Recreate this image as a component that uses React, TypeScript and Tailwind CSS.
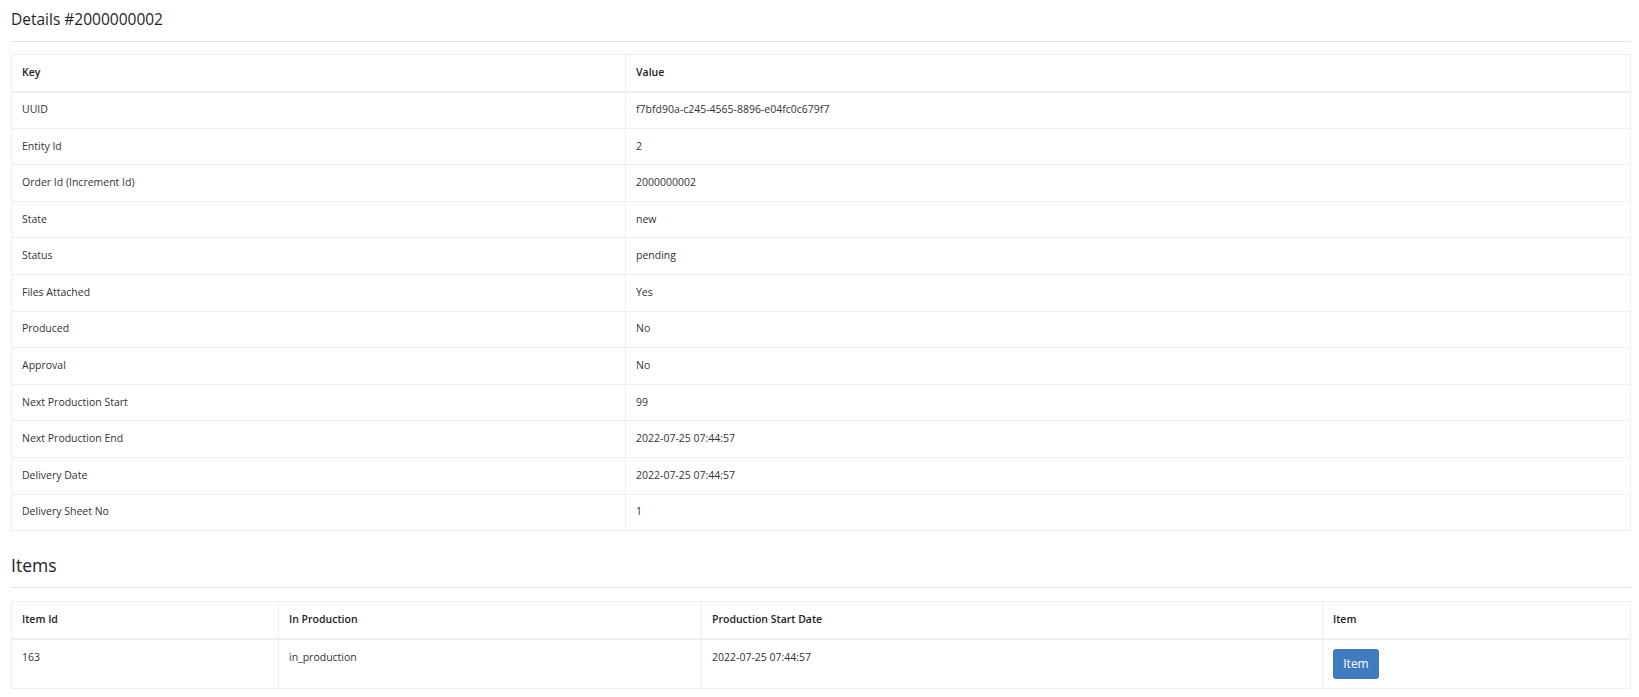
const DETAILS: [string, string][] = [
  ["UUID", "f7bfd90a-c245-4565-8896-e04fc0c679f7"],
  ["Entity Id", "2"],
  ["Order Id (Increment Id)", "2000000002"],
  ["State", "new"],
  ["Status", "pending"],
  ["Files Attached", "Yes"],
  ["Produced", "No"],
  ["Approval", "No"],
  ["Next Production Start", "99"],
  ["Next Production End", "2022-07-25 07:44:57"],
  ["Delivery Date", "2022-07-25 07:44:57"],
  ["Delivery Sheet No", "1"],
];

const ITEMS = [{ id: "163", inProduction: "in_production", start: "2022-07-25 07:44:57" }];

const font = { fontFamily: '"Segoe UI", "Open Sans", "Noto Sans", sans-serif' };

export default function App() {
  return (
    <div className="min-h-screen bg-white pl-[11px] pr-[8px] text-[#333]" style={font}>
      <h4 className="pt-[8px] text-[15.5px] font-medium leading-[22px] text-[#1f1f1f]">Details #2000000002</h4>
      <hr className="mt-[11px] border-t border-[#e2e2e2]" />

      <table className="mt-[12px] w-full border-collapse border border-[#eee] text-[10.5px]">
        <thead>
          <tr className="h-[37px] border-b-2 border-[#eee]">
            <th className="w-[614px] border-r border-[#eee] px-[10px] text-left font-semibold text-[#222]">Key</th>
            <th className="px-[10px] text-left font-semibold text-[#222]">Value</th>
          </tr>
        </thead>
        <tbody>
          {DETAILS.map(([k, v]) => (
            <tr key={k} className="h-[36.6px] border-b border-[#eee]">
              <td className="border-r border-[#eee] px-[10px]">{k}</td>
              <td className="px-[10px]">{v}</td>
            </tr>
          ))}
        </tbody>
      </table>

      <h4 className="mt-[22px] text-[17.5px] leading-[24px] text-[#222]">Items</h4>
      <hr className="mt-[10px] border-t border-[#e2e2e2]" />

      <table className="mt-[13px] w-full border-collapse border border-[#eee] text-[10.5px]">
        <thead>
          <tr className="h-[37px] border-b-2 border-[#eee]">
            <th className="w-[267px] border-r border-[#eee] px-[10px] text-left font-semibold text-[#222]">Item Id</th>
            <th className="w-[423px] border-r border-[#eee] px-[10px] text-left font-semibold text-[#222]">In Production</th>
            <th className="w-[621px] border-r border-[#eee] px-[10px] text-left font-semibold text-[#222]">Production Start Date</th>
            <th className="px-[10px] text-left font-semibold text-[#222]">Item</th>
          </tr>
        </thead>
        <tbody>
          {ITEMS.map((it) => (
            <tr key={it.id} className="h-[50px] border-b border-[#eee] align-top">
              <td className="border-r border-[#eee] px-[10px] pt-[10px]">{it.id}</td>
              <td className="border-r border-[#eee] px-[10px] pt-[10px]">{it.inProduction}</td>
              <td className="border-r border-[#eee] px-[10px] pt-[10px]">{it.start}</td>
              <td className="px-[10px] pt-[9px]">
                <button className="h-[30px] w-[46px] rounded-[3px] bg-[#417bbf] text-[12px] text-white">Item</button>
              </td>
            </tr>
          ))}
        </tbody>
      </table>
    </div>
  );
}
